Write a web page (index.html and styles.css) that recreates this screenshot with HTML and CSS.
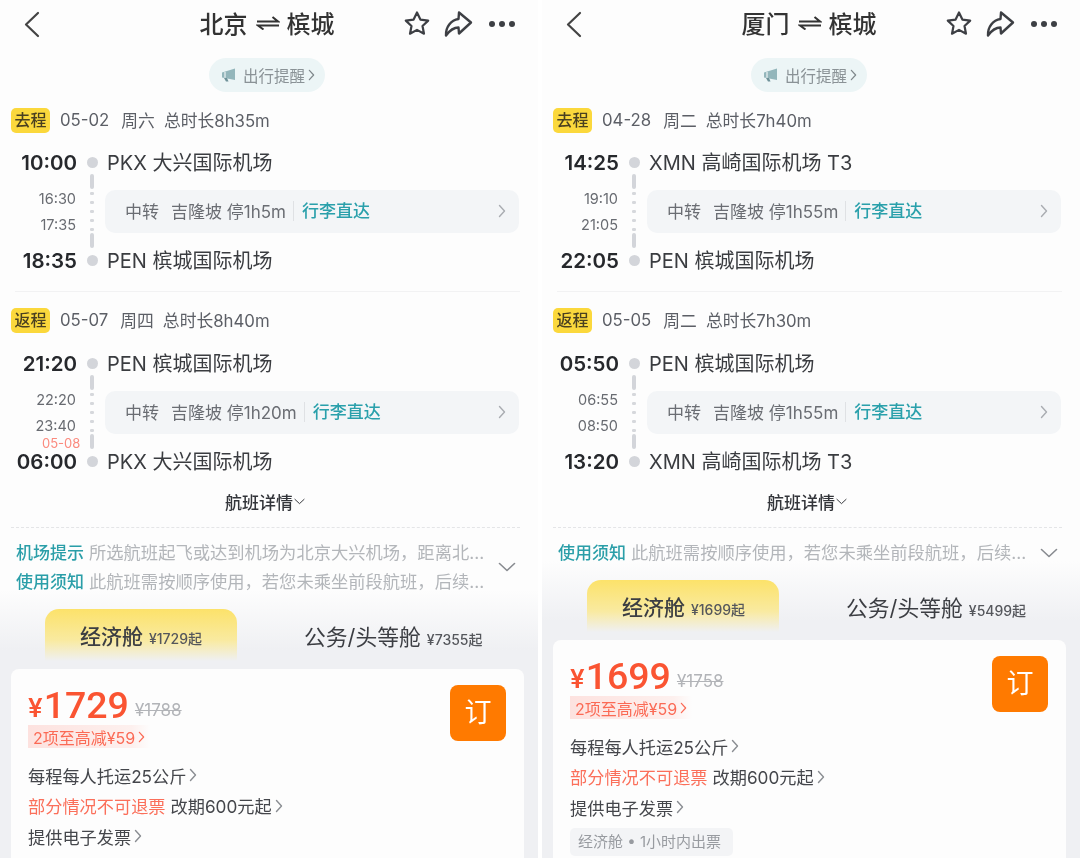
FILE: index.html
```html
<!DOCTYPE html>
<html lang="zh-CN">
<head>
    <meta charset="UTF-8">
    <meta name="viewport" content="width=device-width, initial-scale=1.0">
    <title>航班行程</title>
    <link rel="stylesheet" href="styles.css">
</head>
<body>
    <svg class="sprites" width="0" height="0">
        <symbol id="i-back" viewBox="0 0 18 28"><path d="M15 3 3 14.500 15 26" fill="none" stroke="currentColor" stroke-width="2.200" stroke-linecap="round" stroke-linejoin="round"/></symbol>
        <symbol id="i-star" viewBox="0 0 28 28"><path d="M14 2.500 17.400 9.600 25.200 10.600 19.500 16 21 23.700 14 19.900 7 23.700 8.500 16 2.800 10.600 10.600 9.600Z" fill="none" stroke="currentColor" stroke-width="2.200" stroke-linejoin="round"/></symbol>
        <symbol id="i-share" viewBox="0 0 30 28"><path d="M16 2.500 28 12.500 16 23.500 15.500 17.500C10.500 17.500 7 20 3 25.500 2.500 17 8 10 15.500 9Z" fill="none" stroke="currentColor" stroke-width="2.400" stroke-linejoin="round"/></symbol>
        <symbol id="i-swap" viewBox="0 0 24 14"><path d="M1 5.500H22L16.500 1M23 9.500H2L7.500 13.500" fill="none" stroke="currentColor" stroke-width="2"/></symbol>
        <symbol id="i-horn" viewBox="0 0 16 16"><path d="M1 5.500 14 1.500V13L1 10.500Z" fill="#93b6bb"/><path d="M3 11 5 14.500H7.500L6 11Z" fill="#6f9299"/><path d="M4 5 4 10.800" stroke="#fff" stroke-width="1"/></symbol>
        <symbol id="i-right" viewBox="0 0 8 14"><path d="M1.500 1.500 6.500 7 1.500 12.500" fill="none" stroke="currentColor" stroke-width="1.400" stroke-linecap="round" stroke-linejoin="round"/></symbol>
        <symbol id="i-down" viewBox="0 0 18 10"><path d="M1.500 1.500 9 8.500 16.500 1.500" fill="none" stroke="currentColor" stroke-width="1.600" stroke-linecap="round" stroke-linejoin="round"/></symbol>
    </svg>

    <div class="shots">
        <!-- 北京 - 槟城 -->
        <div class="phone phone-long">
            <header class="nav">
                <svg class="back"><use href="#i-back"/></svg>
                <h1 class="route">北京<svg class="swap"><use href="#i-swap"/></svg>槟城</h1>
                <div class="nav-icons">
                    <svg class="star"><use href="#i-star"/></svg>
                    <svg class="share"><use href="#i-share"/></svg>
                    <div class="more"><i></i><i></i><i></i></div>
                </div>
            </header>
            <div class="pill-row">
                <div class="pill"><svg class="horn"><use href="#i-horn"/></svg>出行提醒<svg class="pill-arrow"><use href="#i-right"/></svg></div>
            </div>

            <section class="leg">
                <div class="leg-head"><span class="tag">去程</span>05-02<span class="week">周六</span><span class="total">总时长8h35m</span></div>
                <div class="stop"><b class="time">10:00</b><i class="dot"></i><span class="airport">PKX 大兴国际机场</span></div>
                <div class="mid">
                    <div class="mid-times"><span>16:30</span><span>17:35</span></div>
                    <div class="line"><i class="seg"></i><i class="dots"></i><i class="seg"></i></div>
                    <div class="transfer">
                        <span class="tr-label">中转</span><span>吉隆坡 停1h5m</span><span class="direct">行李直达</span>
                        <svg class="tr-arrow"><use href="#i-right"/></svg>
                    </div>
                </div>
                <div class="stop"><b class="time">18:35</b><i class="dot"></i><span class="airport">PEN 槟城国际机场</span></div>
            </section>
            <hr class="divider">
            <section class="leg">
                <div class="leg-head"><span class="tag">返程</span>05-07<span class="week">周四</span><span class="total">总时长8h40m</span></div>
                <div class="stop stop-second"><b class="time">21:20</b><i class="dot"></i><span class="airport">PEN 槟城国际机场</span></div>
                <div class="mid">
                    <div class="mid-times"><span>22:20</span><span>23:40</span><em class="next-day">05-08</em></div>
                    <div class="line"><i class="seg"></i><i class="dots"></i><i class="seg"></i></div>
                    <div class="transfer">
                        <span class="tr-label">中转</span><span>吉隆坡 停1h20m</span><span class="direct">行李直达</span>
                        <svg class="tr-arrow"><use href="#i-right"/></svg>
                    </div>
                </div>
                <div class="stop"><b class="time">06:00</b><i class="dot"></i><span class="airport">PKX 大兴国际机场</span></div>
            </section>

            <div class="details">航班详情<svg class="details-arrow"><use href="#i-down"/></svg></div>
            <hr class="dashed">
            <div class="notices">
                <div class="notice-list">
                    <p class="notice"><b>机场提示</b>所选航班起飞或达到机场为北京大兴机场，距离北...</p>
                    <p class="notice"><b>使用须知</b>此航班需按顺序使用，若您未乘坐前段航班，后续...</p>
                </div>
                <svg class="notice-arrow"><use href="#i-down"/></svg>
            </div>

            <div class="tabs">
                <div class="tab tab-on">经济舱<small>¥1729起</small></div>
                <div class="tab">公务/头等舱<small>¥7355起</small></div>
            </div>
            <div class="card">
                <div class="card-top">
                    <div>
                        <div class="price"><span class="yen">¥</span><span class="amount">1729</span><s class="old">¥1788</s></div>
                        <div class="promo">2项至高减¥59<svg class="promo-arrow"><use href="#i-right"/></svg></div>
                    </div>
                    <div class="book">订</div>
                </div>
                <div class="rule">每程每人托运25公斤<svg class="rule-arrow"><use href="#i-right"/></svg></div>
                <div class="rule"><span class="warn">部分情况不可退票</span>改期600元起<svg class="rule-arrow"><use href="#i-right"/></svg></div>
                <div class="rule">提供电子发票<svg class="rule-arrow"><use href="#i-right"/></svg></div>
            </div>
        </div>

        <!-- 厦门 - 槟城 -->
        <div class="phone phone-short">
            <header class="nav">
                <svg class="back"><use href="#i-back"/></svg>
                <h1 class="route">厦门<svg class="swap"><use href="#i-swap"/></svg>槟城</h1>
                <div class="nav-icons">
                    <svg class="star"><use href="#i-star"/></svg>
                    <svg class="share"><use href="#i-share"/></svg>
                    <div class="more"><i></i><i></i><i></i></div>
                </div>
            </header>
            <div class="pill-row">
                <div class="pill"><svg class="horn"><use href="#i-horn"/></svg>出行提醒<svg class="pill-arrow"><use href="#i-right"/></svg></div>
            </div>

            <section class="leg">
                <div class="leg-head"><span class="tag">去程</span>04-28<span class="week">周二</span><span class="total">总时长7h40m</span></div>
                <div class="stop"><b class="time">14:25</b><i class="dot"></i><span class="airport">XMN 高崎国际机场 T3</span></div>
                <div class="mid">
                    <div class="mid-times"><span>19:10</span><span>21:05</span></div>
                    <div class="line"><i class="seg"></i><i class="dots"></i><i class="seg"></i></div>
                    <div class="transfer">
                        <span class="tr-label">中转</span><span>吉隆坡 停1h55m</span><span class="direct">行李直达</span>
                        <svg class="tr-arrow"><use href="#i-right"/></svg>
                    </div>
                </div>
                <div class="stop"><b class="time">22:05</b><i class="dot"></i><span class="airport">PEN 槟城国际机场</span></div>
            </section>
            <hr class="divider">
            <section class="leg">
                <div class="leg-head"><span class="tag">返程</span>05-05<span class="week">周二</span><span class="total">总时长7h30m</span></div>
                <div class="stop stop-second"><b class="time">05:50</b><i class="dot"></i><span class="airport">PEN 槟城国际机场</span></div>
                <div class="mid">
                    <div class="mid-times"><span>06:55</span><span>08:50</span></div>
                    <div class="line"><i class="seg"></i><i class="dots"></i><i class="seg"></i></div>
                    <div class="transfer">
                        <span class="tr-label">中转</span><span>吉隆坡 停1h55m</span><span class="direct">行李直达</span>
                        <svg class="tr-arrow"><use href="#i-right"/></svg>
                    </div>
                </div>
                <div class="stop"><b class="time">13:20</b><i class="dot"></i><span class="airport">XMN 高崎国际机场 T3</span></div>
            </section>

            <div class="details">航班详情<svg class="details-arrow"><use href="#i-down"/></svg></div>
            <hr class="dashed">
            <div class="notices">
                <div class="notice-list">
                    <p class="notice"><b>使用须知</b>此航班需按顺序使用，若您未乘坐前段航班，后续...</p>
                </div>
                <svg class="notice-arrow"><use href="#i-down"/></svg>
            </div>

            <div class="tabs">
                <div class="tab tab-on">经济舱<small>¥1699起</small></div>
                <div class="tab">公务/头等舱<small>¥5499起</small></div>
            </div>
            <div class="card">
                <div class="card-top">
                    <div>
                        <div class="price"><span class="yen">¥</span><span class="amount">1699</span><s class="old">¥1758</s></div>
                        <div class="promo">2项至高减¥59<svg class="promo-arrow"><use href="#i-right"/></svg></div>
                    </div>
                    <div class="book">订</div>
                </div>
                <div class="rule">每程每人托运25公斤<svg class="rule-arrow"><use href="#i-right"/></svg></div>
                <div class="rule"><span class="warn">部分情况不可退票</span>改期600元起<svg class="rule-arrow"><use href="#i-right"/></svg></div>
                <div class="rule">提供电子发票<svg class="rule-arrow"><use href="#i-right"/></svg></div>
                <div class="chip">经济舱 • 1小时内出票</div>
            </div>
        </div>
    </div>
</body>
</html>
```
FILE: styles.css
```css
* {
    box-sizing: border-box;
}
html, body {
    margin: 0;
    height: 858px;
    overflow: hidden;
    background: #fff;
}
body {
    font-family: 'Inter', 'Noto Sans CJK SC', sans-serif;
    color: #333;
}
.sprites {
    display: block;
    height: 0;
}
.shots {
    display: flex;
    gap: 4px;
    height: 858px;
}
.phone {
    flex: 0 0 538px;
    height: 858px;
    overflow: hidden;
    filter: blur(0.4px);
}
.phone-long {
    background: linear-gradient(#fdfdfd 590px, #eff0f3 650px);
}
.phone-short {
    background: linear-gradient(#fdfdfd 561px, #eff0f3 621px);
}

/* 顶部导航 */
.nav {
    display: grid;
    grid-template-columns: 1fr auto 1fr;
    align-items: center;
    height: 50px;
    padding: 0 4px 2px 0;
}
.back {
    width: 18px;
    height: 28px;
    margin-left: 23px;
    color: #444;
}
.route {
    display: flex;
    align-items: center;
    margin: 0;
    padding-bottom: 4px;
    font-size: 24px;
    font-weight: 500;
    color: #333;
}
.swap {
    width: 24px;
    height: 14px;
    margin: 2px 7px 0 8px;
    color: #333;
}
.nav-icons {
    display: flex;
    align-items: center;
    justify-content: flex-end;
    padding-right: 19px;
    color: #3d3f44;
}
.star {
    width: 28px;
    height: 28px;
}
.share {
    width: 30px;
    height: 28px;
    margin-left: 12px;
}
.more {
    display: flex;
    gap: 4px;
    margin-left: 16px;
}
.more i {
    width: 6px;
    height: 6px;
    border-radius: 50%;
    background: #3d3f44;
}

/* 出行提醒 */
.pill-row {
    display: flex;
    justify-content: center;
    padding-right: 4px;
    margin-top: 8px;
}
.pill {
    display: flex;
    align-items: center;
    height: 34px;
    padding: 0 10px 0 12px;
    border-radius: 17px;
    background: #ecf5f6;
    font-size: 15.500px;
    color: #8a9296;
}
.horn {
    width: 16px;
    height: 16px;
    margin-right: 6px;
}
.pill-arrow {
    width: 7px;
    height: 12px;
    margin-left: 3px;
    color: #7f878b;
}

/* 行程 */
.leg-head {
    display: flex;
    align-items: center;
    margin: 16px 0 0 11px;
    height: 23px;
    font-size: 16.800px;
    color: #5c5f66;
}
.tag {
    flex: none;
    align-self: flex-start;
    width: 39px;
    height: 25px;
    margin-right: 10px;
    border-radius: 5px;
    background: #fbd83c;
    font-size: 16px;
    font-weight: 500;
    line-height: 24px;
    text-align: center;
    color: #4a4020;
}
.week {
    margin-left: 12px;
}
.total {
    margin-left: 9px;
}
.stop {
    display: grid;
    grid-template-columns: 77px 30px 1fr;
    grid-template-rows: 24px;
    align-items: center;
    height: 24px;
    line-height: 24px;
}
.leg-head + .stop {
    margin-top: 19px;
}
.leg-head + .stop-second {
    margin-top: 20px;
}
.time {
    padding-top: 1px;
    font-size: 20.500px;
    font-weight: 600;
    text-align: right;
    color: #26282c;
}
.dot {
    justify-self: center;
    width: 11px;
    height: 11px;
    border-radius: 50%;
    background: #d3d5da;
}
.airport {
    padding-top: 1px;
    font-size: 20px;
    white-space: nowrap;
    color: #3a3c40;
}
.mid {
    position: relative;
    display: grid;
    grid-template-columns: 77px 30px 1fr;
    height: 74px;
}
.mid-times {
    display: flex;
    flex-direction: column;
    align-items: flex-end;
    gap: 6px;
    padding: 15px 1px 0 0;
    font-size: 14.500px;
    line-height: 20px;
    color: #686b71;
}
.next-day {
    position: absolute;
    top: 63px;
    left: 42px;
    font-style: normal;
    font-size: 13px;
    line-height: 11px;
    color: #fb8a7e;
}
.line {
    display: flex;
    flex-direction: column;
    align-items: center;
    height: 74px;
}
.seg {
    flex: 0 0 15px;
    width: 4px;
    border-radius: 2px;
    background: #d3d5da;
}
.dots {
    flex: 1;
    width: 4px;
    background: radial-gradient(circle, #d6d8dc 1.700px, transparent 2px) 0 0 / 4px 9px repeat-y;
}
.transfer {
    display: flex;
    align-items: center;
    height: 43px;
    margin: 16px 19px 0 -2px;
    padding: 0 13px 2px 20px;
    border-radius: 10px;
    background: #f3f5f7;
    font-size: 17px;
    color: #6a6d73;
}
.tr-label {
    margin-right: 12px;
}
.direct {
    margin-left: 7px;
    padding-left: 8px;
    border-left: 1px solid #dfe1e4;
    line-height: 20px;
    font-weight: 500;
    color: #2aa0ab;
}
.tr-arrow {
    width: 8px;
    height: 14px;
    margin-left: auto;
    color: #a9acb1;
}
.divider {
    height: 1px;
    margin: 19px 18px 0 15px;
    border: 0;
    background: #f2f2f3;
}

/* 航班详情 */
.details {
    display: flex;
    align-items: center;
    justify-content: center;
    height: 24px;
    margin-top: 18px;
    padding: 0 8px 4px 0;
    font-size: 17px;
    font-weight: 500;
    color: #33353a;
}
.details-arrow {
    width: 11px;
    height: 7px;
    margin-left: 1px;
    color: #33353a;
}
.dashed {
    height: 0;
    margin: 12px 18px 0 11px;
    border: 0;
    border-top: 1px dashed #e4e5e7;
}
.notices {
    display: flex;
    align-items: center;
    margin-top: 10px;
    padding: 0 22px 0 16px;
}
.notice-list {
    flex: 1;
    min-width: 0;
}
.notice {
    height: 29px;
    margin: 0;
    font-size: 17.300px;
    line-height: 29px;
    white-space: nowrap;
    color: #b3b6ba;
}
.notice b {
    margin-right: 5px;
    font-size: 17px;
    font-weight: 500;
    color: #2a9ea8;
}
.notice-arrow {
    flex: none;
    width: 18px;
    height: 10px;
    color: #888b90;
}

/* 舱位 */
.tabs {
    display: flex;
    height: 60px;
    margin-top: 13px;
    padding-left: 45px;
}
.tab {
    height: 52px;
    padding-top: 13px;
    margin-left: 67px;
    font-size: 21.800px;
    line-height: 30px;
    white-space: nowrap;
    color: #3c3e43;
}
.tab small {
    margin-left: 6px;
    font-size: 14px;
    font-weight: 500;
    color: #55575c;
}
.tab-on {
    width: 192px;
    margin-left: 0;
    padding-left: 35px;
    border-radius: 14px 14px 0 0;
    background: linear-gradient(#fce26a, #f9eaa0 60%, rgba(240, 240, 240, 0));
    font-size: 21px;
    font-weight: 500;
}
.card {
    height: 300px;
    margin: 0 14px 0 11px;
    padding: 16px 18px 0 17px;
    border-radius: 8px;
    background: #fdfdfd;
}
.card-top {
    display: flex;
    justify-content: space-between;
    height: 75px;
}
.price {
    display: flex;
    align-items: center;
    height: 40px;
    color: #fa5432;
}
.yen {
    padding-top: 5px;
    margin-right: 1px;
    font-size: 26px;
    font-weight: 600;
}
.amount {
    font-family: 'Roboto', sans-serif;
    font-size: 37.500px;
    font-weight: 500;
}
.old {
    margin-left: 6px;
    padding-top: 10px;
    font-size: 17px;
    color: #b2b4b8;
}
.promo {
    display: inline-flex;
    align-items: center;
    height: 23px;
    padding: 0 5px;
    background: linear-gradient(90deg, #fde2df, #fdf0ee 85%, rgba(253, 240, 238, 0));
    font-size: 16px;
    color: #fb6a55;
}
.promo-arrow {
    width: 7px;
    height: 12px;
    margin-left: 3px;
    color: #fb6a55;
}
.book {
    flex: none;
    width: 56px;
    height: 56px;
    border-radius: 8px;
    background: #ff7a00;
    font-size: 27px;
    line-height: 56px;
    text-align: center;
    color: #fff;
}
.rule {
    display: flex;
    align-items: center;
    height: 30.500px;
    font-size: 17.200px;
    white-space: nowrap;
    color: #44464b;
}
.warn {
    margin-right: 5px;
    color: #fb6f5a;
}
.rule-arrow {
    width: 8px;
    height: 14px;
    margin-left: 3px;
    color: #8a8d92;
}
.chip {
    display: inline-block;
    height: 28px;
    margin-top: 5px;
    padding: 0 12px 0 8px;
    border-radius: 5px;
    background: #f3f4f6;
    font-size: 15px;
    line-height: 28px;
    color: #989ba0;
}
```
